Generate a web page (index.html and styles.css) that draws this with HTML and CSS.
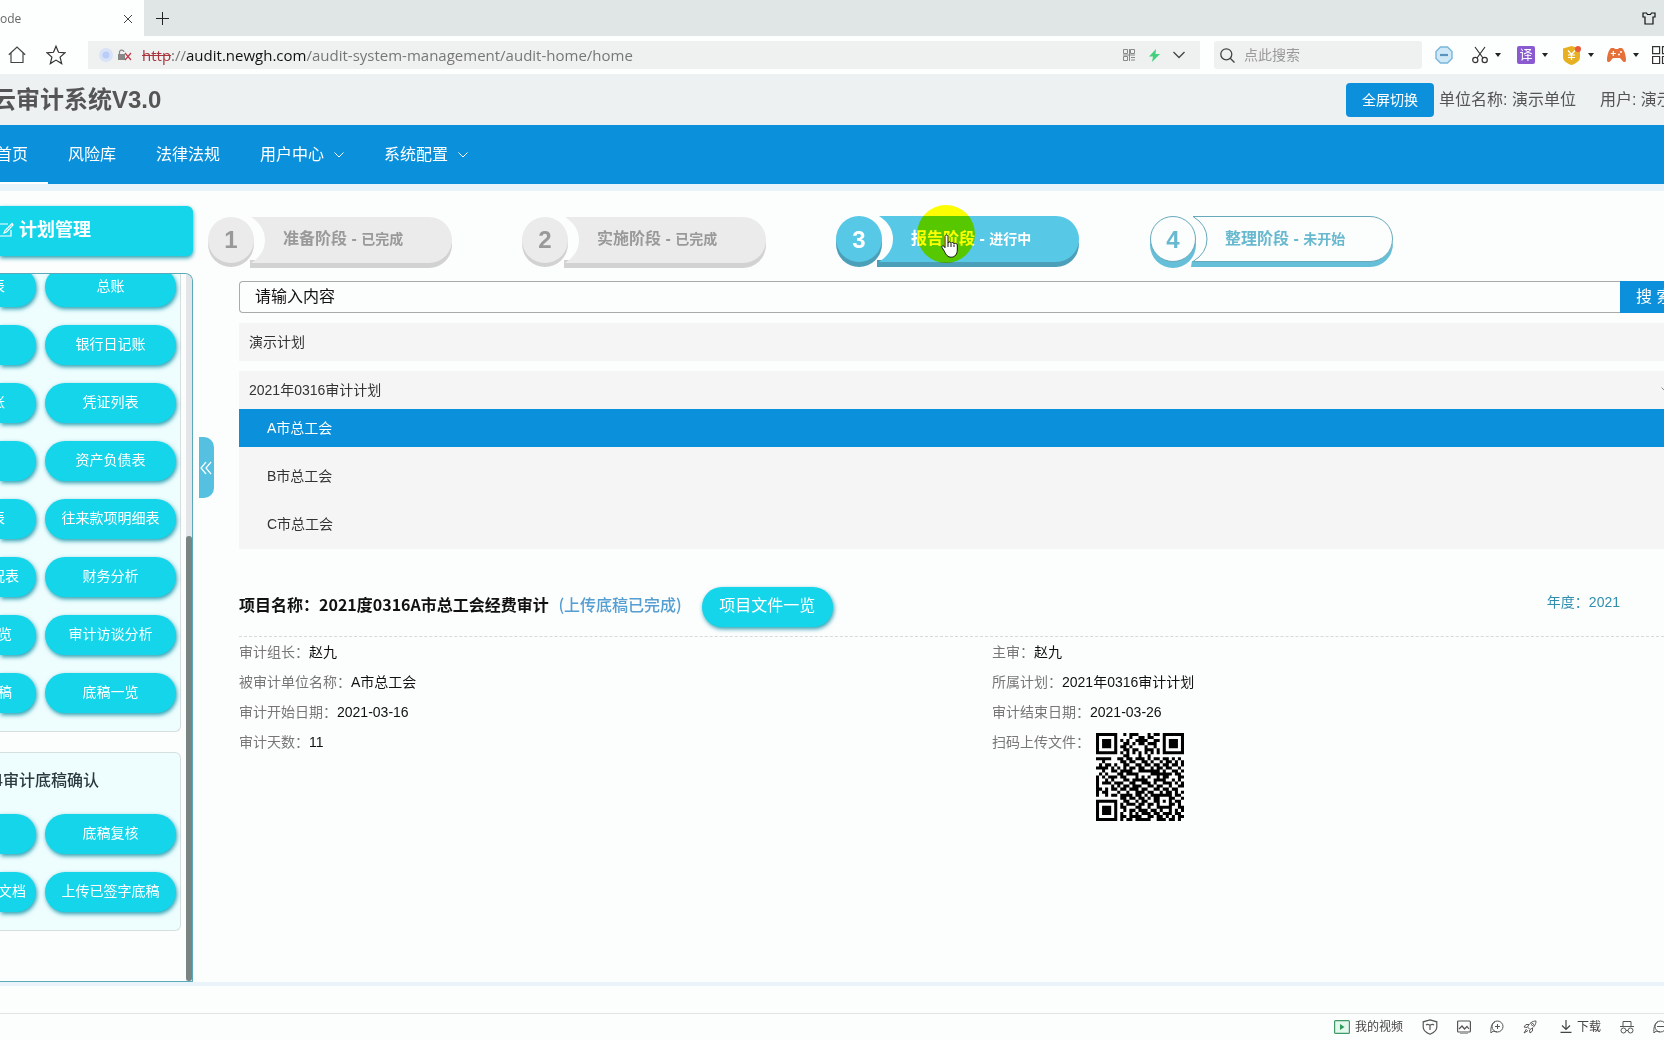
FILE: index.html
```html
<!DOCTYPE html>
<html lang="zh-CN">
<head>
<meta charset="utf-8">
<title>云审计系统V3.0</title>
<link rel="stylesheet" href="styles.css">
</head>
<body>
<div class="tabs">
  <div class="tab"><span>ode</span>
    <button class="icon-btn" aria-label="关闭标签页"><svg width="10" height="10" viewBox="0 0 10 10" fill="none" stroke="#444"><path d="M1 1l8 8M9 1l-8 8"/></svg></button>
  </div>
  <button class="icon-btn new-tab" aria-label="新建标签页"><svg width="13" height="13" viewBox="0 0 13 13" fill="none" stroke="#222"><path d="M6.5 0v13M0 6.5h13"/></svg></button>
  <button class="icon-btn skin" aria-label="皮肤"><svg width="14" height="13" viewBox="0 0 14 13" fill="none" stroke="#111" stroke-width="1.2"><path d="M4.500 1H1v4h2v7h8V5h2V1H9.500L8.500 2.500h-3z"/></svg></button>
</div>

<div class="toolbar">
  <button class="icon-btn home" aria-label="主页"><svg width="18" height="18" viewBox="0 0 18 18" fill="none" stroke="#444" stroke-width="1.200"><path d="M.8 8.800L9 1l8.200 7.800M3 7v9.500h12V7"/></svg></button>
  <button class="icon-btn star" aria-label="收藏"><svg width="20" height="20" viewBox="0 0 20 20" fill="none" stroke="#333" stroke-width="1.200"><path d="M10 1.200l2.500 6.100 6.600.5-5 4.300 1.600 6.500L10 15.100l-5.700 3.500 1.600-6.500-5-4.300 6.600-.5z"/></svg></button>
  <div class="address">
    <svg width="14" height="14" viewBox="0 0 14 14"><circle cx="7" cy="7" r="7" fill="#d9e3f8"/><circle cx="7" cy="7" r="3.500" fill="#b9cdf8"/></svg>
    <svg class="lock" width="14" height="12" viewBox="0 0 14 12" fill="none"><path d="M0 5h7v6H0z" fill="#888"/><path d="M1.500 5V3.500a2.200 2.200 0 014.400-.5" stroke="#888" stroke-width="1.200"/><path d="M7 4l6 7M13 4l-6 7" stroke="#c23b4b" stroke-width="1.200"/></svg>
    <div class="url"><s>http</s>://<b>audit.newgh.com</b>/audit-system-management/audit-home/home</div>
    <svg width="12" height="12" viewBox="0 0 12 12" fill="none" stroke="#888"><path d="M.5.5h4v4h-4zM7.500.5h4v4h-4zM.5 7.500h4v4h-4zM0 6h12M6.500 0v12M8 8.500h4M8 11h4"/></svg>
    <svg class="bolt" width="11" height="13" viewBox="0 0 11 13"><path d="M7 0L0 7.500h4L3 13l8-8H6.500z" fill="#43cf7c"/></svg>
    <svg width="12" height="8" viewBox="0 0 12 8" fill="none" stroke="#444" stroke-width="1.300"><path d="M.5 1L6 6.500 11.500 1"/></svg>
  </div>
  <label class="quick-search">
    <svg width="15" height="15" viewBox="0 0 15 15" fill="none" stroke="#444" stroke-width="1.300"><circle cx="6.300" cy="6.300" r="5.500"/><path d="M10.200 10.200l4.300 4.300"/></svg>
    <input type="text" placeholder="点此搜索" aria-label="搜索">
  </label>
  <div class="tools">
    <button class="icon-btn tool plain" aria-label="拦截"><svg width="18" height="18" viewBox="0 0 18 18"><path d="M5.500 1h7L17 5.500v7L12.500 17h-7L1 12.500v-7z" fill="#cfe8f7" stroke="#79b5da" stroke-width="1.400"/><path d="M5 9h8" stroke="#5a94be" stroke-width="2.200"/></svg></button>
    <button class="icon-btn tool" aria-label="截图"><svg width="16" height="18" viewBox="0 0 16 18" fill="none" stroke="#333" stroke-width="1.200"><path d="M3 1l8 11M13 1L5 12"/><circle cx="3.300" cy="14" r="2.600"/><circle cx="12.700" cy="14" r="2.600"/></svg><i class="caret"></i></button>
    <button class="icon-btn tool" aria-label="翻译"><span class="translate">译</span><i class="caret"></i></button>
    <button class="icon-btn tool" aria-label="安全支付"><svg width="19" height="19" viewBox="0 0 19 19"><path d="M1 2.500L9.500 0 18 2.500V11c0 4-4 6.500-8.500 8C5 17.500 1 15 1 11z" fill="#e6b022"/><path d="M6 4.500l3.500 4 3.500-4M9.500 8.500V14M6 9h7M6 11.500h7" stroke="#fff" stroke-width="1.200" fill="none"/><circle cx="16" cy="3" r="3" fill="#ea5a3d"/></svg><i class="caret"></i></button>
    <button class="icon-btn tool" aria-label="游戏"><svg width="19" height="16" viewBox="0 0 19 16"><path d="M4 1h3l1 1h3l1-1h3c2.500 2 4 8 4 12 0 2.500-2 2.500-3.200 1.200L13 11H6l-2.800 3.200C2 15.500 0 15.500 0 13 0 9 1.500 3 4 1z" fill="#e5703a"/><path d="M6.300 4v5M3.800 6.500h5" stroke="#fff" stroke-width="1.200"/><circle cx="12" cy="7.500" r="1" fill="#fff"/><circle cx="14" cy="5" r="1" fill="#fff"/></svg><i class="caret"></i></button>
    <button class="icon-btn tool" aria-label="更多"><svg width="18" height="18" viewBox="0 0 18 18" fill="none" stroke="#333" stroke-width="1.200"><path d="M.6.6h7v7h-7zM10.500.6h7v7h-7zM.6 10.500h7v7h-7zM10.500 10.500h7v7h-7z"/></svg></button>
  </div>
</div>

<header class="site-header">
  <h1>云审计系统V3.0</h1>
  <div class="account">
    <button class="fullscreen">全屏切换</button>
    <span class="unit">单位名称: 演示单位</span>
    <span class="user">用户: 演示</span>
  </div>
</header>

<nav class="nav">
  <a class="current" href="#">首页</a>
  <a href="#">风险库</a>
  <a href="#">法律法规</a>
  <a href="#">用户中心<svg width="10" height="6" viewBox="0 0 10 6" fill="none" stroke="#fff"><path d="M.5.5L5 5 9.500.5"/></svg></a>
  <a href="#">系统配置<svg width="10" height="6" viewBox="0 0 10 6" fill="none" stroke="#fff"><path d="M.5.5L5 5 9.500.5"/></svg></a>
</nav>

<div class="workspace">
  <aside class="sidebar">
    <h2 class="side-title"><svg width="14" height="16" viewBox="0 0 14 16" fill="none" stroke="#fff" stroke-width="1.200"><path d="M8 2H-2v12h13V8M12 1.500L5 8.500 4 11l2.500-1L13 3z"/></svg>计划管理</h2>
    <div class="panel">
      <div class="cards">
        <section class="card card-top">
          <div class="grid">
            <button class="pill cut n5">表</button><button class="pill">总账</button>
            <button class="pill cut" aria-label="日记账"></button><button class="pill">银行日记账</button>
            <button class="pill cut n5">账</button><button class="pill">凭证列表</button>
            <button class="pill cut" aria-label="报表"></button><button class="pill">资产负债表</button>
            <button class="pill cut n5">表</button><button class="pill">往来款项明细表</button>
            <button class="pill cut n7">况表</button><button class="pill">财务分析</button>
            <button class="pill cut n6">览</button><button class="pill">审计访谈分析</button>
            <button class="pill cut n6">稿</button><button class="pill">底稿一览</button>
          </div>
        </section>
        <section class="card">
          <h3><span>4审计底稿确认</span></h3>
          <div class="grid">
            <button class="pill cut" aria-label="底稿"></button><button class="pill">底稿复核</button>
            <button class="pill cut n8">文档</button><button class="pill">上传已签字底稿</button>
          </div>
        </section>
      </div>
      <div class="track"><div class="thumb"></div></div>
    </div>
  </aside>
  <button class="collapse" aria-label="收起侧栏"><svg width="12" height="14" viewBox="0 0 12 14" fill="none" stroke="#fff" stroke-width="1.200"><path d="M6 1L1 7l5 6M11 1L6 7l5 6"/></svg></button>

  <main class="main">
    <ol class="steps">
      <li class="step done">
        <svg width="244" height="52" viewBox="0 0 244 52"><g fill="#d2d2d2"><circle cx="23" cy="28" r="23"/><path d="M42 44h179a23 23 0 0023-20v5a23 23 0 01-23 23H42z"/></g><g fill="#ebebeb"><circle cx="23" cy="24" r="23"/><path d="M43 1h178a23 23 0 010 46H43Q57 38 57 24T43 1z"/></g></svg>
        <b class="num">1</b><span class="label">准备阶段 - <small>已完成</small></span>
      </li>
      <li class="step done">
        <svg width="244" height="52" viewBox="0 0 244 52"><g fill="#d2d2d2"><circle cx="23" cy="28" r="23"/><path d="M42 44h179a23 23 0 0023-20v5a23 23 0 01-23 23H42z"/></g><g fill="#ebebeb"><circle cx="23" cy="24" r="23"/><path d="M43 1h178a23 23 0 010 46H43Q57 38 57 24T43 1z"/></g></svg>
        <b class="num">2</b><span class="label">实施阶段 - <small>已完成</small></span>
      </li>
      <li class="step active">
        <svg width="244" height="52" viewBox="0 0 244 52"><g fill="#4b9fb9"><circle cx="23" cy="28" r="23"/><path d="M41 44h179a23 23 0 0023-20v4a23 23 0 01-23 23H41z"/></g><g fill="#57c8e6"><circle cx="23" cy="23" r="23"/><path d="M43 0h177a23 23 0 010 46H43Q57 37 57 23T43 0z"/></g></svg>
        <b class="num">3</b><span class="label">报告阶段 - <small>进行中</small></span>
        <div class="halo"></div>
        <svg class="pointer" width="18" height="24" viewBox="0 0 18 24"><path d="M4 2.500C4 .5 7 .5 7 2.500V9c.3-1.400 2.800-1.300 3 .3.500-1.300 2.800-1 3 .6.600-1 3-.8 3.300 1V16c0 4-2.300 7.200-6 7.200-3.600 0-5-2-7-6L1 13.500c-.6-1.600 1-2.300 2-1.200l1 1.400z" fill="#fff" stroke="#111"/><path d="M7 9v4M10 9.500V13M13 10.500V13" stroke="#111"/></svg>
      </li>
      <li class="step todo">
        <svg width="244" height="52" viewBox="0 0 244 52"><g fill="#66bfd8"><circle cx="23" cy="29" r="23"/><path d="M42 45h178a23 23 0 0023-20v3a23 23 0 01-23 23H41z"/></g><g fill="#fcfdfd" stroke="#66a9bb"><circle cx="23" cy="23" r="22.500"/><path d="M43 .5h177a22 22 0 010 45H43Q57 37 57 23T43 .5z"/></g></svg>
        <b class="num">4</b><span class="label">整理阶段 - <small>未开始</small></span>
      </li>
    </ol>

    <div class="content">
      <form class="search">
        <input type="text" placeholder="请输入内容" aria-label="请输入内容">
        <button type="button">搜 索</button>
      </form>

      <div class="plan">演示计划</div>
      <div class="plan open">2021年0316审计计划<svg width="10" height="6" viewBox="0 0 10 6" fill="none" stroke="#888"><path d="M.5.5L5 5 9.500.5"/></svg></div>
      <ul class="units">
        <li class="selected">A市总工会</li>
        <li>B市总工会</li>
        <li>C市总工会</li>
      </ul>

      <div class="project">
        <h2>项目名称：2021度0316A市总工会经费审计 <span>(上传底稿已完成)</span></h2>
        <button class="pill files">项目文件一览</button>
        <span class="year">年度：2021</span>
      </div>

      <div class="details">
        <dl>
          <div><dt>审计组长：</dt><dd>赵九</dd></div>
          <div><dt>被审计单位名称：</dt><dd>A市总工会</dd></div>
          <div><dt>审计开始日期：</dt><dd>2021-03-16</dd></div>
          <div><dt>审计天数：</dt><dd>11</dd></div>
        </dl>
        <dl>
          <div><dt>主审：</dt><dd>赵九</dd></div>
          <div><dt>所属计划：</dt><dd>2021年0316审计计划</dd></div>
          <div><dt>审计结束日期：</dt><dd>2021-03-26</dd></div>
          <div><dt>扫码上传文件：</dt><dd><svg class="qr" id="qr" width="88" height="88" viewBox="0 0 29 29" role="img" aria-label="二维码"></svg></dd></div>
        </dl>
      </div>
    </div>
  </main>
</div>

<footer class="statusbar">
  <a class="video" href="#"><svg width="16" height="14" viewBox="0 0 16 14"><rect x=".6" y=".6" width="14.800" height="12.800" rx="1" fill="#e4f7ec" stroke="#3f9a68" stroke-width="1.200"/><path d="M6 4l4.500 3L6 10z" fill="#2f9a5c"/></svg>我的视频</a>
  <svg width="16" height="16" viewBox="0 0 16 16" fill="none" stroke="#555" stroke-width="1.200"><path d="M8 .8l6.800 2V8c0 3.500-3 5.700-6.800 7.200C4.200 13.700 1.200 11.500 1.200 8V2.800zM4 6c2-1.800 3 .2 4 .2s2-2 4-.2M8 6v5"/></svg>
  <svg width="14" height="14" viewBox="0 0 14 14" fill="none" stroke="#555" stroke-width="1.200"><rect x=".6" y="1" width="12.800" height="11" rx="1"/><path d="M2 9l3-3 2.500 3L10 6.500 12 9M3 14h8"/></svg>
  <svg width="14" height="14" viewBox="0 0 14 14" fill="none" stroke="#555"><circle cx="7.500" cy="6.500" r="5.500"/><path d="M7.500 4v5M5 6.500h5M1 13c-.5-4 0-9 4-11.500M1 13c1-2 3-2 6-1"/></svg>
  <svg width="14" height="14" viewBox="0 0 14 14" fill="none" stroke="#555"><path d="M13 1C9 1 6.500 3.500 4.500 7L7 9.500c3.500-2 6-4.500 6-8.500zM6 4.500H3L1 7l3 .5M9.500 8v3L7 13l-.5-3M3.500 9L1 13l4-2.500"/><circle cx="9.500" cy="4.500" r="1"/></svg>
  <a class="download" href="#"><svg width="12" height="13" viewBox="0 0 12 13" fill="none" stroke="#444" stroke-width="1.200"><path d="M6 0v9M2 5.500L6 9.500l4-4M.5 12.300h11"/></svg>下载</a>
  <svg width="14" height="14" viewBox="0 0 14 14" fill="none" stroke="#555"><path d="M3 6V1.500h8V6M0 6.500h14M6 10.500h2"/><circle cx="3.500" cy="10.500" r="2.500"/><circle cx="10.500" cy="10.500" r="2.500"/></svg>
  <svg width="14" height="14" viewBox="0 0 14 14" fill="none" stroke="#555"><circle cx="7.500" cy="6.500" r="5.500"/><path d="M4 6.500h7M1 13c-.5-4 0-9 4-11.500M1 13c1-2 3-2 6-1"/></svg>
</footer>
<script src="qr.js"></script>
</body>
</html>
```
FILE: qr.js
```js
// One string per row of the code, one character per module.
const rows = [
  "11111110010111000101101111111",
  "10000010000100110110001000001",
  "10111010101001111001101011101",
  "10111010011010110111001011101",
  "10111010110100001001001011101",
  "10000010011011001110101000001",
  "11111110101010101010101111111",
  "00000000011000100100000000000",
  "11111001101101110101101101010",
  "00100000110110011010010110101",
  "01011010011001101101101101101",
  "11110101010110110010110110010",
  "00100110111100111111101001101",
  "01010001101111000011111110110",
  "10101110110001010100101100011",
  "10010100011011111001111001010",
  "10111011100110011101001110101",
  "10000101011011100110110010011",
  "11010110110111011001101101100",
  "10110001001001110110010110101",
  "10010110111101101011111110110",
  "00000000110110110101100011001",
  "11111110011001011001101010110",
  "10000010101110110110100011010",
  "10111010110001100100111110011",
  "10111010010110111011010010101",
  "10111010100101011101101110110",
  "10000010110111100110110101011",
  "11111110101101111100111011010"
];
const d = rows.map((row, y) =>
  [...row].map((bit, x) => bit === "1" ? `M${x} ${y}h1v1h-1z` : "").join("")
).join("");
const path = document.createElementNS("http://www.w3.org/2000/svg", "path");
path.setAttribute("d", d);
document.getElementById("qr").append(path);
```
FILE: styles.css
```css
* { box-sizing: border-box; }
body {
  margin: 0;
  min-height: 100vh;
  display: flex;
  flex-direction: column;
  overflow-x: hidden;
  background: #fcfdfd;
  color: #333;
  font: 14px/20px "Liberation Sans", "Noto Sans CJK SC", sans-serif;
}
h1, h2, h3, ul, ol, dl, dd { margin: 0; padding: 0; }
ul, ol { list-style: none; }
a { color: inherit; text-decoration: none; }
button, input { font: inherit; color: inherit; }
svg { flex: none; display: block; }
.icon-btn {
  border: 0;
  padding: 0;
  background: none;
  display: flex;
  align-items: center;
}

/* browser chrome */
.tabs { height: 36px; display: flex; align-items: center; background: #e0e6e6; }
.tab {
  width: 144px;
  height: 36px;
  padding: 2px 11px 0 0;
  display: flex;
  align-items: center;
  justify-content: space-between;
  background: #fdfefe;
  color: #666;
  font-family: "Open Sans", sans-serif;
  font-size: 12px;
}
.new-tab { margin-left: 12px; }
.skin { margin-left: auto; margin-right: 8px; }
.toolbar { height: 38px; display: flex; align-items: center; background: #fdfefe; overflow: hidden; }
.home { margin-left: 8px; }
.star { margin-left: 20px; }
.address {
  flex: 1;
  min-width: 0;
  height: 28px;
  margin-left: 22px;
  padding: 0 15px 0 11px;
  display: flex;
  align-items: center;
  background: #eff1f1;
}
.lock { margin-left: 5px; }
.url {
  flex: 1;
  min-width: 0;
  margin-left: 10px;
  white-space: nowrap;
  overflow: hidden;
  color: #777;
  font: 15px/24px "Open Sans", sans-serif;
}
.url s { color: #a8343c; }
.url b { color: #111; font-weight: 400; }
.bolt { margin: 0 13px 0 14px; }
.quick-search {
  width: 208px;
  height: 28px;
  margin-left: 14px;
  padding-left: 6px;
  display: flex;
  align-items: center;
  gap: 9px;
  border-radius: 3px;
  background: #eff1f1;
}
.quick-search input { width: 160px; border: 0; padding: 0; background: none; outline: 0; }
.quick-search input::placeholder { color: #999; opacity: 1; }
.tools { flex: none; width: 242px; padding-left: 13px; display: flex; align-items: center; }
.tool { flex: none; width: 45px; gap: 7px; }
.plain { width: 37px; }
.caret { border: 3px solid transparent; border-top: 4px solid #222; border-bottom: 0; }
.translate {
  width: 18px;
  height: 18px;
  border-radius: 2px;
  background: #8a5bd0;
  color: #fff;
  font-size: 13px;
  line-height: 17px;
}

/* application header */
.site-header {
  height: 51px;
  padding-top: 1px;
  display: flex;
  align-items: center;
  justify-content: space-between;
  background: #edf1f2;
  overflow: hidden;
}
.site-header h1 { margin-left: -8px; color: #555; font-size: 24px; line-height: 32px; }
.account {
  width: 318px;
  display: flex;
  align-items: center;
  white-space: nowrap;
  color: #555;
  font-size: 16px;
}
.fullscreen {
  flex: none;
  width: 88px;
  height: 34px;
  padding: 0;
  border: 0;
  border-radius: 4px;
  background: #0d90db;
  color: #fff;
  font-size: 14px;
}
.unit { margin: 0 24px 0 5px; }
.nav {
  height: 59px;
  display: flex;
  background: #0b91dc;
  color: #fff;
  font-size: 16px;
}
.nav a { padding: 2px 20px 0; display: flex; align-items: center; gap: 10px; border-bottom: 2px solid transparent; }
.nav .current { width: 48px; justify-content: flex-end; white-space: nowrap; border-color: #fff; }

/* work area */
.workspace {
  flex: 1;
  display: flex;
  border-top: 7px solid #e8f3fa;
  border-bottom: 4px solid #eaf3f9;
}
.sidebar { width: 193px; padding-top: 15px; display: flex; flex-direction: column; }
.side-title {
  height: 50px;
  padding-bottom: 3px;
  display: flex;
  align-items: center;
  gap: 5px;
  border-radius: 0 6px 6px 0;
  background: #14d5ea;
  box-shadow: 0 2px 4px #279eae;
  color: #fff;
  font-size: 18px;
}
.panel {
  flex: 1;
  margin-top: 17px;
  display: flex;
  border: 1px solid #5aa9b8;
  border-left: 0;
  border-radius: 0 8px 0 0;
  overflow: hidden;
}
.cards { width: 181px; margin-right: 5px; padding-bottom: 50px; }
.card {
  margin-bottom: 20px;
  padding: 18px 4px 18px 0;
  border: 1px solid #d6dede;
  border-left: 0;
  border-radius: 0 6px 6px 0;
  background: #eefdfe;
}
.card:last-child { margin-bottom: 0; }
.card-top { margin-top: -7px; padding-top: 0; border-top: 0; border-radius: 0 0 6px 0; }
.card h3 {
  width: 99px;
  margin-bottom: 23px;
  display: flex;
  justify-content: flex-end;
  white-space: nowrap;
  font-size: 16px;
  line-height: 20px;
  font-weight: 500;
  color: #2b3a3f;
}
.grid { display: grid; grid-template-columns: 36px 131px; gap: 18px 9px; }
.pill {
  height: 40px;
  padding: 0 0 3px;
  border: 0;
  border-radius: 20px;
  background: #14d5ea;
  box-shadow: 1px 2px 4px #2a9fb0;
  color: #fff;
  white-space: nowrap;
}
.cut { display: flex; align-items: center; justify-content: flex-end; border-radius: 0 20px 20px 0; }
.n5 { padding-right: 31px; }
.n6 { padding-right: 24px; }
.n7 { padding-right: 17px; }
.n8 { padding-right: 10px; }
.track { width: 6px; display: flex; align-items: flex-end; background: #e3e5e8; }
.thumb { width: 6px; height: 63%; border-radius: 3px; background: #788583; }
.collapse {
  width: 15px;
  height: 61px;
  margin: 246px 0 0 6px;
  padding: 0 0 0 1px;
  border: 0;
  border-radius: 0 10px 10px 0;
  background: #55c0e0;
}

.main { flex: 1; min-width: 0; margin-left: -6px; overflow: hidden; padding-top: 25px; }
.steps { display: flex; gap: 70px; }
.step { position: relative; flex: none; display: grid; font-weight: 700; font-size: 16px; }
.step > svg:first-child, .num, .label { grid-area: 1 / 1; }
.num { width: 46px; padding-top: 10px; text-align: center; font-size: 24px; line-height: 28px; }
.label { padding: 13px 0 0 75px; line-height: 20px; }
.label small { font-size: 14px; }
.done { color: #999; }
.active { color: #fff; }
.todo { color: #68b9cf; }
.halo {
  position: absolute;
  left: 81px;
  top: -11px;
  width: 58px;
  height: 58px;
  border-radius: 50%;
  background: #ffff00;
  mix-blend-mode: multiply;
}
.pointer { position: absolute; left: 105px; top: 18px; }

.content { margin: 13px 0 0 31px; }
.search { display: flex; }
.search input {
  flex: 1;
  min-width: 0;
  height: 32px;
  padding: 0 15px;
  border: 1px solid #aaa;
  border-right: 0;
  border-radius: 4px 0 0 4px;
  background: #fcfdfd;
  font-size: 16px;
}
.search input::placeholder { color: #111; opacity: 1; }
.search button {
  width: 44px;
  padding: 0 0 0 16px;
  border: 0;
  background: #0d90db;
  color: #fff;
  font-size: 16px;
  text-align: left;
  white-space: nowrap;
  overflow: hidden;
}
.plan { height: 38px; margin-top: 10px; padding: 9px 10px; background: #f5f5f5; }
.open { display: flex; justify-content: space-between; align-items: center; padding-right: 0; }
.open svg { margin-right: -7px; }
.units { background: #f5f5f5; padding-bottom: 6px; }
.units li { padding: 9px 28px; margin-bottom: 10px; line-height: 20px; }
.units li:last-child { margin-bottom: 0; }
.units .selected { background: #0b91dc; color: #fff; }

.project {
  height: 88px;
  padding-top: 38px;
  display: flex;
  align-items: flex-start;
  border-bottom: 1px dashed #d5dada;
}
.project h2 {
  padding-top: 5px;
  font: 700 16px/24px "Noto Sans CJK SC", sans-serif;
  color: #111;
}
.project h2 span { margin-left: 6px; color: #549ed2; font-weight: 500; }
.files { width: 131px; margin-left: 20px; font-size: 16px; }
.year { margin: 5px 44px 0 auto; color: #328eae; }
.details { display: grid; grid-template-columns: 753px 1fr; padding-top: 5px; }
.details dl > div { display: flex; margin-bottom: 10px; }
.details dt { color: #777; }
.details dd { color: #111; }
.qr { margin: 1px 0 0 6px; }

/* browser status bar */
.statusbar {
  height: 54px;
  padding: 27px 0 0 calc(100% - 330px);
  display: flex;
  align-items: center;
  gap: 19px;
  background: linear-gradient(#e2e5e5, #e2e5e5) 0 27px / 100% 1px no-repeat;
  overflow: hidden;
  color: #444;
  font-size: 12px;
}
.statusbar a { display: flex; align-items: center; gap: 5px; white-space: nowrap; }
.download { margin-left: 4px; }
```
